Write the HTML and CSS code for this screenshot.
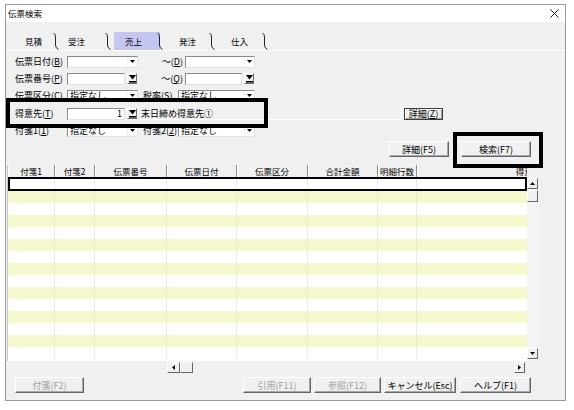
FILE: index.html
```html
<!DOCTYPE html>
<html lang="ja">
<head>
<meta charset="utf-8">
<title>伝票検索</title>
<link rel="stylesheet" href="styles.css">
</head>
<body>
<div class="window">
  <div class="titlebar">
    <span class="title">伝票検索</span>
    <svg class="close" width="9" height="9" viewBox="0 0 9 9"><path d="M0.5 0.5L8.5 8.5M8.5 0.5L0.5 8.5" stroke="#222" stroke-width="1" fill="none"/></svg>
  </div>

  <div class="tabs">
    <div class="tab t1"><span class="tab-text">見積</span><svg class="sep" width="6" height="18" viewBox="0 0 6 18"><path d="M0.5 1 Q2.5 2 2.5 5 V13 Q2.5 16 5.5 17.5" stroke="#222" fill="none"/></svg></div>
    <div class="tab t2"><span class="tab-text">受注</span><svg class="sep" width="6" height="18" viewBox="0 0 6 18"><path d="M0.5 1 Q2.5 2 2.5 5 V13 Q2.5 16 5.5 17.5" stroke="#222" fill="none"/></svg></div>
    <div class="tab t3 selected"><span class="tab-text">売上</span><svg class="sep" width="6" height="18" viewBox="0 0 6 18"><path d="M0.5 1 Q2.5 2 2.5 5 V13 Q2.5 16 5.5 17.5" stroke="#222" fill="none"/></svg></div>
    <div class="tab t4"><span class="tab-text">発注</span><svg class="sep" width="6" height="18" viewBox="0 0 6 18"><path d="M0.5 1 Q2.5 2 2.5 5 V13 Q2.5 16 5.5 17.5" stroke="#222" fill="none"/></svg></div>
    <div class="tab t5"><span class="tab-text">仕入</span><svg class="sep" width="6" height="18" viewBox="0 0 6 18"><path d="M0.5 1 Q2.5 2 2.5 5 V13 Q2.5 16 5.5 17.5" stroke="#222" fill="none"/></svg></div>
  </div>

  <div class="panel">
    <div class="form">
      <div class="row">
        <span class="lbl">伝票日付(<u>B</u>)</span>
        <div class="combo w71"><span class="val"></span><span class="drop"><svg width="5" height="3" viewBox="0 0 5 3"><path d="M0 0H5L2.5 3Z"/></svg></span></div>
        <span class="lbl2">～(<u>D</u>)</span>
        <div class="combo w70"><span class="val"></span><span class="drop"><svg width="5" height="3" viewBox="0 0 5 3"><path d="M0 0H5L2.5 3Z"/></svg></span></div>
      </div>
      <div class="row">
        <span class="lbl">伝票番号(<u>P</u>)</span>
        <div class="edit w58"></div>
        <span class="pick"><svg width="7" height="8" viewBox="0 0 7 8"><path d="M0 0H7L3.5 4.5Z"/><rect x="0" y="6" width="7" height="1.6"/></svg></span>
        <span class="lbl2 narrow">～(<u>Q</u>)</span>
        <div class="edit w57"></div>
        <span class="pick"><svg width="7" height="8" viewBox="0 0 7 8"><path d="M0 0H7L3.5 4.5Z"/><rect x="0" y="6" width="7" height="1.6"/></svg></span>
      </div>
      <div class="row">
        <span class="lbl">伝票区分(<u>C</u>)</span>
        <div class="combo w71"><span class="val">指定なし</span><span class="drop"><svg width="5" height="3" viewBox="0 0 5 3"><path d="M0 0H5L2.5 3Z"/></svg></span></div>
        <span class="lbl3">税率(<u>S</u>)</span>
        <div class="combo w77"><span class="val">指定なし</span><span class="drop"><svg width="5" height="3" viewBox="0 0 5 3"><path d="M0 0H5L2.5 3Z"/></svg></span></div>
      </div>
      <div class="row row-cust">
        <span class="lbl">得意先(<u>T</u>)</span>
        <div class="edit w58 num">1</div>
        <span class="pick"><svg width="7" height="8" viewBox="0 0 7 8"><path d="M0 0H7L3.5 4.5Z"/><rect x="0" y="6" width="7" height="1.6"/></svg></span>
        <div class="readout">末日締め得意先①</div>
        <button class="btn btn-small">詳細(<u>Z</u>)</button>
      </div>
      <div class="row">
        <span class="lbl">付箋1(<u>1</u>)</span>
        <div class="combo w71"><span class="val">指定なし</span><span class="drop"><svg width="5" height="3" viewBox="0 0 5 3"><path d="M0 0H5L2.5 3Z"/></svg></span></div>
        <span class="lbl3">付箋2(<u>2</u>)</span>
        <div class="combo w77"><span class="val">指定なし</span><span class="drop"><svg width="5" height="3" viewBox="0 0 5 3"><path d="M0 0H5L2.5 3Z"/></svg></span></div>
      </div>
    </div>

    <div class="actions">
      <button class="btn w60">詳細(F5)</button>
      <button class="btn w70b">検索(F7)</button>
    </div>

    <div class="grid">
      <div class="grid-main">
        <div class="ghead">
          <span class="hc c1">付箋1</span>
          <span class="hc c2">付箋2</span>
          <span class="hc c3">伝票番号</span>
          <span class="hc c4">伝票日付</span>
          <span class="hc c5">伝票区分</span>
          <span class="hc c6">合計金額</span>
          <span class="hc c7">明細行数</span>
          <span class="hc c8">得意先</span>
        </div>
        <div class="gbody">
          <div class="grow current"><span class="bc c1"></span><span class="bc c2"></span><span class="bc c3"></span><span class="bc c4"></span><span class="bc c5"></span><span class="bc c6"></span><span class="bc c7"></span><span class="bc c8"></span></div>
          <div class="grow alt"><span class="bc c1"></span><span class="bc c2"></span><span class="bc c3"></span><span class="bc c4"></span><span class="bc c5"></span><span class="bc c6"></span><span class="bc c7"></span><span class="bc c8"></span></div>
          <div class="grow"><span class="bc c1"></span><span class="bc c2"></span><span class="bc c3"></span><span class="bc c4"></span><span class="bc c5"></span><span class="bc c6"></span><span class="bc c7"></span><span class="bc c8"></span></div>
          <div class="grow alt"><span class="bc c1"></span><span class="bc c2"></span><span class="bc c3"></span><span class="bc c4"></span><span class="bc c5"></span><span class="bc c6"></span><span class="bc c7"></span><span class="bc c8"></span></div>
          <div class="grow"><span class="bc c1"></span><span class="bc c2"></span><span class="bc c3"></span><span class="bc c4"></span><span class="bc c5"></span><span class="bc c6"></span><span class="bc c7"></span><span class="bc c8"></span></div>
          <div class="grow alt"><span class="bc c1"></span><span class="bc c2"></span><span class="bc c3"></span><span class="bc c4"></span><span class="bc c5"></span><span class="bc c6"></span><span class="bc c7"></span><span class="bc c8"></span></div>
          <div class="grow"><span class="bc c1"></span><span class="bc c2"></span><span class="bc c3"></span><span class="bc c4"></span><span class="bc c5"></span><span class="bc c6"></span><span class="bc c7"></span><span class="bc c8"></span></div>
          <div class="grow alt"><span class="bc c1"></span><span class="bc c2"></span><span class="bc c3"></span><span class="bc c4"></span><span class="bc c5"></span><span class="bc c6"></span><span class="bc c7"></span><span class="bc c8"></span></div>
          <div class="grow"><span class="bc c1"></span><span class="bc c2"></span><span class="bc c3"></span><span class="bc c4"></span><span class="bc c5"></span><span class="bc c6"></span><span class="bc c7"></span><span class="bc c8"></span></div>
          <div class="grow alt"><span class="bc c1"></span><span class="bc c2"></span><span class="bc c3"></span><span class="bc c4"></span><span class="bc c5"></span><span class="bc c6"></span><span class="bc c7"></span><span class="bc c8"></span></div>
          <div class="grow"><span class="bc c1"></span><span class="bc c2"></span><span class="bc c3"></span><span class="bc c4"></span><span class="bc c5"></span><span class="bc c6"></span><span class="bc c7"></span><span class="bc c8"></span></div>
          <div class="grow alt"><span class="bc c1"></span><span class="bc c2"></span><span class="bc c3"></span><span class="bc c4"></span><span class="bc c5"></span><span class="bc c6"></span><span class="bc c7"></span><span class="bc c8"></span></div>
          <div class="grow"><span class="bc c1"></span><span class="bc c2"></span><span class="bc c3"></span><span class="bc c4"></span><span class="bc c5"></span><span class="bc c6"></span><span class="bc c7"></span><span class="bc c8"></span></div>
          <div class="grow alt"><span class="bc c1"></span><span class="bc c2"></span><span class="bc c3"></span><span class="bc c4"></span><span class="bc c5"></span><span class="bc c6"></span><span class="bc c7"></span><span class="bc c8"></span></div>
          <div class="grow last"><span class="bc c1"></span><span class="bc c2"></span><span class="bc c3"></span><span class="bc c4"></span><span class="bc c5"></span><span class="bc c6"></span><span class="bc c7"></span><span class="bc c8"></span></div>
        </div>
      </div>
      <div class="vscroll">
        <span class="vs-top"></span>
        <span class="sbtn"><svg width="5" height="3" viewBox="0 0 5 3"><path d="M0 3H5L2.5 0Z"/></svg></span>
        <span class="sthumb v"></span>
        <span class="strack"></span>
        <span class="sbtn"><svg width="5" height="3" viewBox="0 0 5 3"><path d="M0 0H5L2.5 3Z"/></svg></span>
      </div>
    </div>

    <div class="hscroll">
      <span class="sbtn h"><svg width="3" height="5" viewBox="0 0 3 5"><path d="M3 0V5L0 2.5Z"/></svg></span>
      <span class="sthumb h"></span>
      <span class="strack"></span>
      <span class="sbtn h r"><svg width="3" height="5" viewBox="0 0 3 5"><path d="M0 0V5L3 2.5Z"/></svg></span>
    </div>

    <div class="footer">
      <button class="btn disabled w69">付箋(F2)</button>
      <div class="footer-right">
        <button class="btn disabled w68">引用(F11)</button>
        <button class="btn disabled w67">参照(F12)</button>
        <button class="btn w72">キャンセル(Esc)</button>
        <button class="btn w71b">ヘルプ(F1)</button>
      </div>
    </div>
  </div>

  <div class="highlight hl-cust"></div>
  <div class="highlight hl-search"></div>
</div>
</body>
</html>
```

FILE: styles.css
```css
* { box-sizing: border-box; }
html, body { margin: 0; padding: 0; background: #fff; }
body {
  font-family: "Noto Sans CJK JP", "Noto Sans", sans-serif;
  font-size: 9px;
  color: #000;
  line-height: 1;
}
u { text-decoration: underline; text-underline-offset: 1px; }

.window {
  position: relative;
  margin: 4px 0 0 5px;
  width: 561px;
  height: 397px;
  border: 1px solid #9a9a9a;
  background: #f0f0f0;
  display: flex;
  flex-direction: column;
}

.titlebar {
  flex: none;
  height: 17px;
  background: #fff;
  display: flex;
  align-items: center;
  justify-content: space-between;
  padding: 0 6px 0 2px;
}
.title { font-size: 8.5px; }

/* tabs */
.tabs {
  flex: none;
  display: flex;
  height: 18px;
  margin-top: 10px;
}
.tab {
  display: flex;
  align-items: center;
  height: 18px;
}
.tab-text { width: 18px; font-size: 8.5px; padding-top: 1px; }
.sep { flex: none; }
.t1 { padding-left: 19px; }
.t1 .tab-text { margin-right: 10px; }
.t2 { padding-left: 9px; }
.t2 .tab-text { margin-right: 19px; }
.t3 { padding-left: 11px; margin-left: 3px; }
.t3 .tab-text { margin-right: 14px; }
.t4 { padding-left: 16px; }
.t4 .tab-text { margin-right: 12px; }
.t5 { padding-left: 16px; }
.t5 .tab-text { margin-right: 13px; }
.tab.selected { background: linear-gradient(to right, #c5c5f2 calc(100% - 3px), transparent calc(100% - 3px)); }

.panel {
  flex: 1;
  border-top: 1px solid #fff;
  display: flex;
  flex-direction: column;
}

/* form */
.form { padding: 2px 0 0 9px; }
.row {
  display: flex;
  align-items: center;
  height: 17px;
}
.row-cust { margin-top: 1px; }
.lbl { width: 52px; flex: none; white-space: nowrap; }
.lbl2 { width: 47px; flex: none; text-align: right; padding-right: 2px; white-space: nowrap; }
.lbl2.narrow { width: 48px; }
.lbl3 { width: 40px; flex: none; padding-left: 5px; white-space: nowrap; }

.combo, .edit {
  height: 12px;
  background: #fff;
  border-style: solid;
  border-width: 1px;
  border-color: #8a8a8a #e2e2e2 #e2e2e2 #8a8a8a;
  display: flex;
  align-items: center;
  flex: none;
}
.combo .val { flex: 1; padding-left: 2px; white-space: nowrap; }
.combo .drop {
  width: 10px;
  height: 10px;
  display: flex;
  align-items: center;
  justify-content: center;
  background: #fff;
  border-left: 1px solid #f0f0f0;
}
.w71 { width: 71px; }
.w70 { width: 70px; }
.w77 { width: 77px; }
.w58 { width: 58px; }
.w57 { width: 57px; }
.edit.num { justify-content: flex-end; padding-right: 2px; }

.pick {
  flex: none;
  width: 10px;
  height: 11px;
  margin-left: 2px;
  display: flex;
  align-items: center;
  justify-content: center;
  background: #f0f0f0;
  border-style: solid;
  border-width: 1px;
  border-color: #fff #6e6e6e #6e6e6e #fff;
}

.readout {
  flex: none;
  width: 263px;
  height: 13px;
  margin-left: 2px;
  padding-left: 2px;
  display: flex;
  align-items: center;
  border-bottom: 1px solid #fff;
  border-right: 1px solid #fff;
  white-space: nowrap;
}

/* buttons */
.btn {
  font-family: inherit;
  font-size: 9px;
  line-height: 1;
  color: #000;
  height: 16px;
  padding: 0;
  background: #f0f0f0;
  border-style: solid;
  border-width: 1px;
  border-color: #fff #646464 #646464 #fff;
  box-shadow: inset -1px -1px 0 #a8a8a8;
  display: flex;
  align-items: center;
  justify-content: center;
  flex: none;
  white-space: nowrap;
}
.btn.disabled { color: #a0a0a0; }
.btn-small {
  width: 39px;
  height: 12px;
  margin-left: 2px;
  border: 1px solid #3c3c3c;
  box-shadow: inset 1px 1px 0 #fff, inset -1px -1px 0 #9a9a9a;
}
.w60 { width: 60px; }
.w70b { width: 70px; }
.w69 { width: 69px; }
.w68 { width: 68px; }
.w67 { width: 67px; }
.w72 { width: 72px; }
.w71b { width: 71px; }

.actions {
  display: flex;
  justify-content: flex-end;
  gap: 12px;
  margin-top: 2px;
  padding-right: 34px;
}

/* grid */
.grid {
  display: flex;
  margin-top: 8px;
  margin-left: 1px;
}
.grid-main {
  width: 520px;
  overflow: hidden;
  border-left: 1px solid #c8c8c8;
}
.ghead {
  display: flex;
  height: 12px;
  background: #f0f0f0;
}
.hc {
  flex: none;
  display: flex;
  align-items: center;
  justify-content: center;
  border-right: 1px solid #8c8c8c;
  box-shadow: inset 1px 0 0 #fff;
  white-space: nowrap;
  font-size: 8.5px;
}
.c1 { width: 47px; }
.c2 { width: 40px; }
.c3 { width: 72px; }
.c4 { width: 70px; }
.c5 { width: 71px; }
.c6 { width: 70px; }
.c7 { width: 39px; }
.c8 { width: 224px; }

.gbody {
  height: 184px;
  background: #fff;
}
.grow {
  display: flex;
  height: 12px;
  background: #fff;
}
.grow.alt { background: #f5f9cd; }
.grow.current {
  height: 14px;
  border: 2px solid #000;
}
.grow.current .bc:first-child { margin-left: -2px; }
.bc {
  flex: none;
  border-right: 1px solid #ebebeb;
}
.grow.alt .bc { border-right-color: #e8ecc2; }

.vscroll {
  width: 12px;
  height: 196px;
  display: flex;
  flex-direction: column;
  background: #f4f4f4;
}
.vs-top { height: 13px; flex: none; background: #f0f0f0; }
.sbtn {
  flex: none;
  width: 11px;
  height: 11px;
  background: #f0f0f0;
  border-style: solid;
  border-width: 1px;
  border-color: #fff #646464 #646464 #fff;
  display: flex;
  align-items: center;
  justify-content: center;
}
.sthumb {
  flex: none;
  background: #f0f0f0;
  border-style: solid;
  border-width: 1px;
  border-color: #fff #646464 #646464 #fff;
}
.sthumb.v { width: 11px; height: 12px; margin-top: 1px; }
.strack { flex: 1; }
.vscroll .sbtn:last-child { margin-bottom: 2px; }

.hscroll {
  display: flex;
  height: 12px;
  margin-left: 161px;
  width: 358px;
  align-items: center;
}
.sbtn.h { width: 13px; height: 11px; }
.sbtn.h.r { width: 11px; }
.sthumb.h { width: 13px; height: 11px; }

.footer {
  display: flex;
  margin-top: 4px;
  padding: 0 34px 0 9px;
  justify-content: space-between;
}
.footer-right { display: flex; gap: 3px; }
.footer-right .w71b { margin-left: 1px; }

/* annotation overlays */
.highlight {
  position: absolute;
  border: 4px solid #000;
  pointer-events: none;
}
.hl-cust { left: 0; top: 93px; width: 262px; height: 30px; }
.hl-search { left: 447px; top: 127px; width: 90px; height: 36px; }
```
